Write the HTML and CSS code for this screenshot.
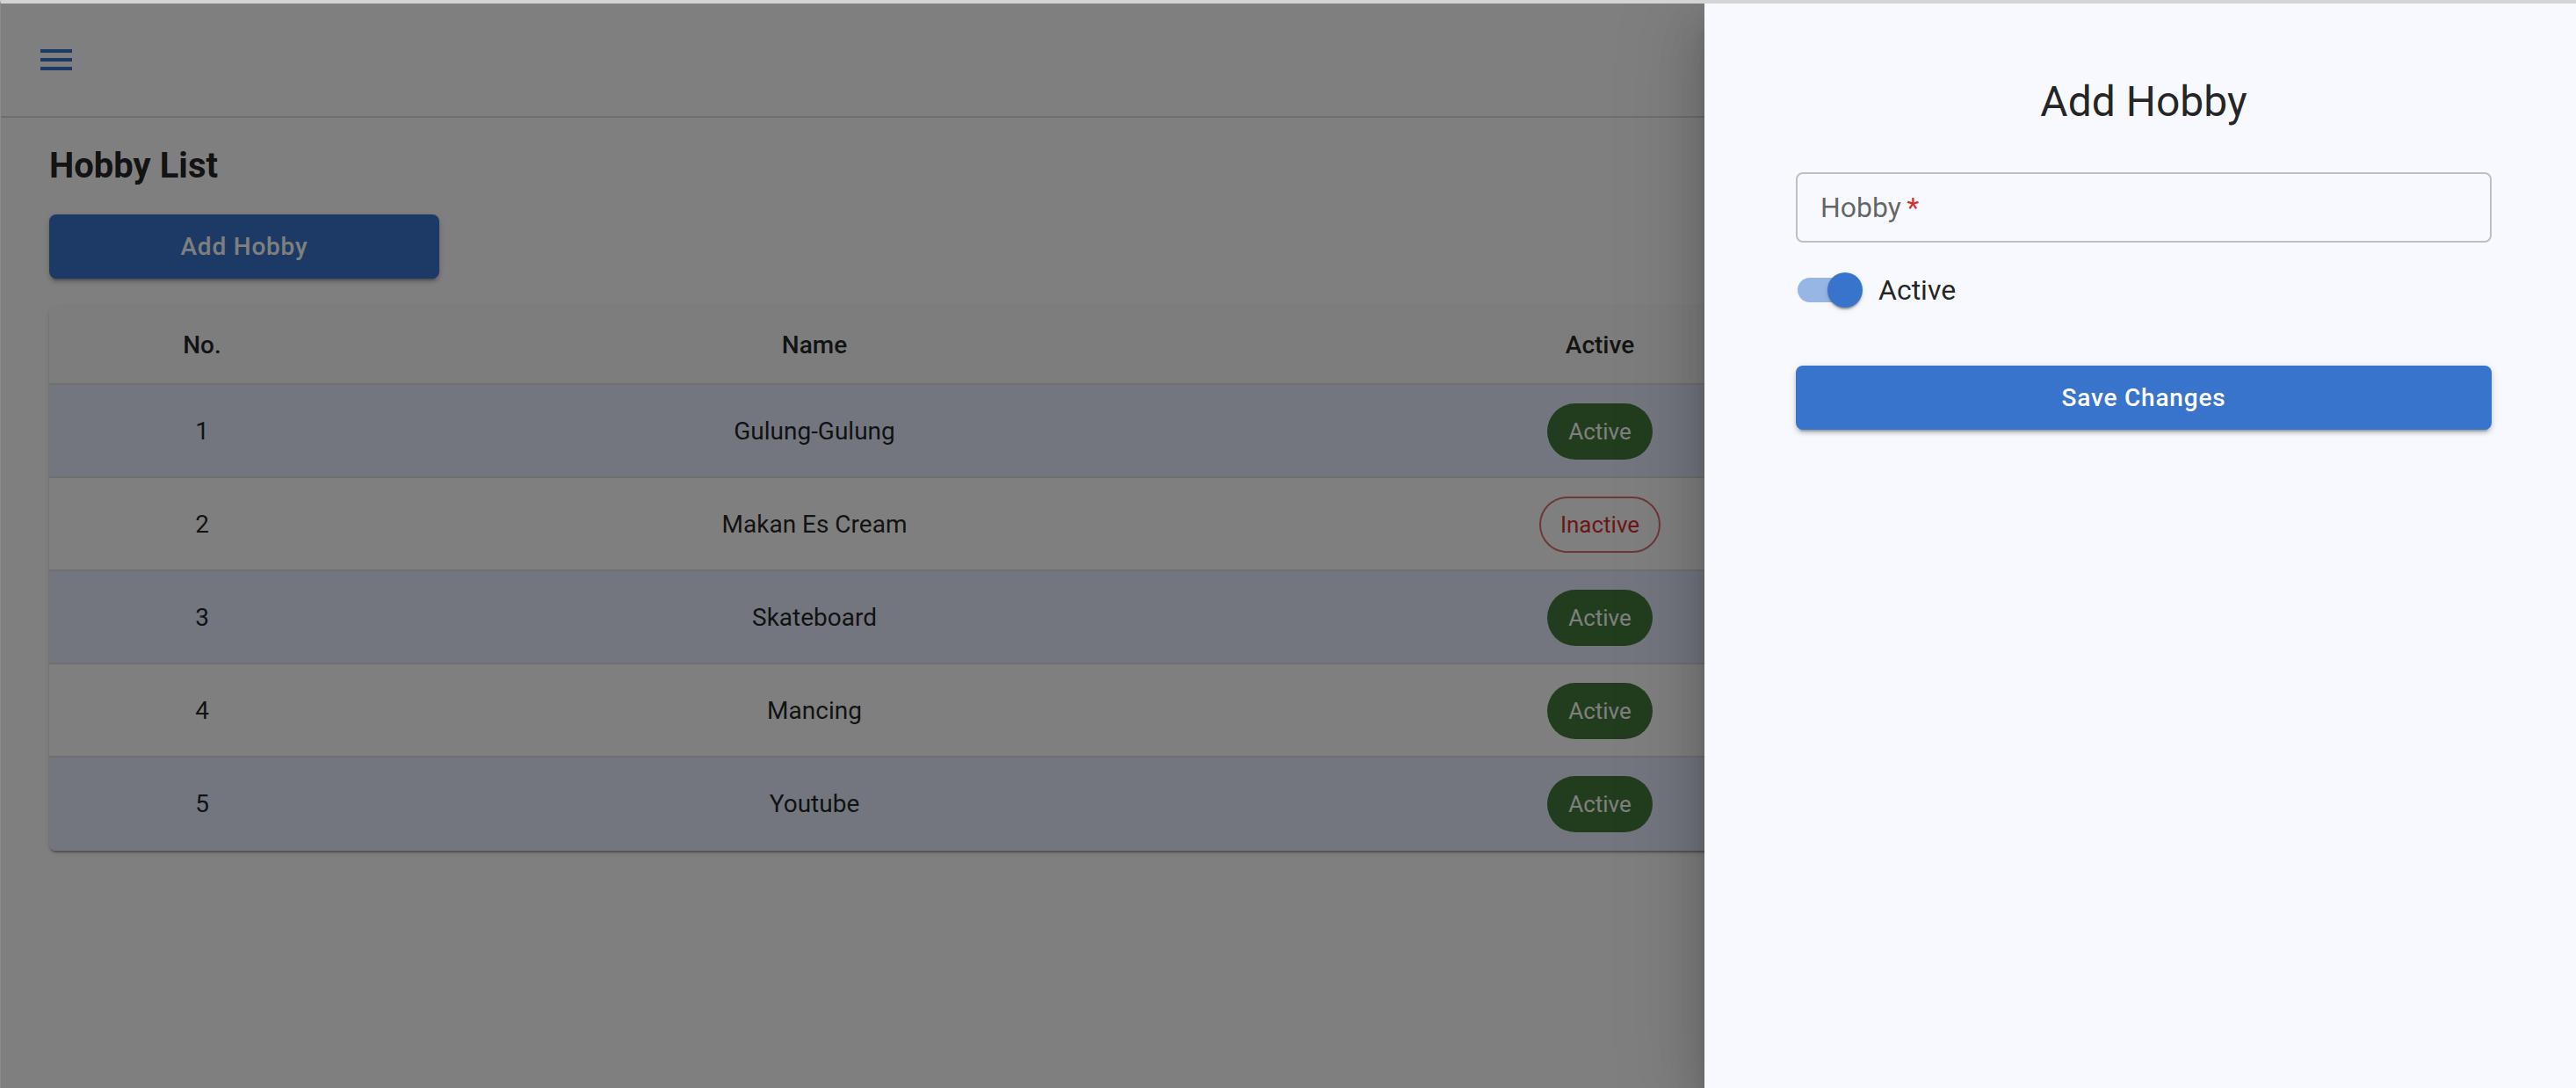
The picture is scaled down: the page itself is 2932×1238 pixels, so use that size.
FILE: index.html
```html
<!DOCTYPE html>
<html lang="en">
<head>
<meta charset="utf-8">
<title>Hobby List</title>
<link rel="stylesheet" href="styles.css">
</head>
<body>
<div class="window">
  <div class="app">
    <header class="appbar">
      <button class="menu-btn" aria-label="menu">
        <svg viewBox="0 0 24 24" width="48" height="48"><path fill="currentColor" d="M3 18h18v-2H3v2zm0-5h18v-2H3v2zm0-7v2h18V6H3z"/></svg>
      </button>
    </header>
    <main class="content">
      <h1 class="page-title">Hobby List</h1>
      <button class="btn btn-add">Add Hobby</button>
      <div class="table-card">
        <div class="trow thead">
          <div class="cell">No.</div>
          <div class="cell">Name</div>
          <div class="cell">Active</div>
        </div>
        <div class="trow tbody striped">
          <div class="cell">1</div>
          <div class="cell">Gulung-Gulung</div>
          <div class="cell"><span class="chip chip-success">Active</span></div>
        </div>
        <div class="trow tbody">
          <div class="cell">2</div>
          <div class="cell">Makan Es Cream</div>
          <div class="cell"><span class="chip chip-error">Inactive</span></div>
        </div>
        <div class="trow tbody striped">
          <div class="cell">3</div>
          <div class="cell">Skateboard</div>
          <div class="cell"><span class="chip chip-success">Active</span></div>
        </div>
        <div class="trow tbody">
          <div class="cell">4</div>
          <div class="cell">Mancing</div>
          <div class="cell"><span class="chip chip-success">Active</span></div>
        </div>
        <div class="trow tbody striped">
          <div class="cell">5</div>
          <div class="cell">Youtube</div>
          <div class="cell"><span class="chip chip-success">Active</span></div>
        </div>
      </div>
    </main>
  </div>
  <div class="backdrop"></div>
  <aside class="drawer">
    <h2 class="drawer-title">Add Hobby</h2>
    <form class="form">
      <label class="field">
        <span class="field-label">Hobby&thinsp;<span class="req">*</span></span>
        <input class="field-input" type="text">
      </label>
      <div class="switch-row">
        <span class="switch">
          <span class="switch-track"></span>
          <span class="switch-thumb"></span>
        </span>
        <span class="switch-label">Active</span>
      </div>
      <button type="button" class="btn btn-save">Save Changes</button>
    </form>
  </aside>
</div>
</body>
</html>
```
FILE: styles.css
```css
* { box-sizing: border-box; }
html, body { margin: 0; padding: 0; }
body {
  font-family: Roboto, "Noto Sans", "Liberation Sans", sans-serif;
  background: #fff;
  overflow: hidden;
}
.window {
  position: relative;
  height: 1238px;
  border-top: 4px solid #d4d4d4;
  border-left: 1px solid #8c8c8c;
  overflow: hidden;
  background: #fff;
}
.appbar {
  height: 130px;
  display: flex;
  align-items: center;
  padding-left: 39px;
  border-bottom: 2px solid #dcdcdc;
  background: #fff;
}
.menu-btn {
  border: 0;
  background: none;
  padding: 0;
  color: #3874cb;
  display: flex;
}
.content {
  padding: 31px 55px 0;
}
.page-title {
  margin: 0;
  font-size: 40px;
  line-height: 48px;
  font-weight: 700;
  color: rgba(0, 0, 0, 0.87);
}
.btn {
  border: 0;
  border-radius: 8px;
  font-family: inherit;
  font-size: 28px;
  font-weight: 500;
  letter-spacing: 0.8px;
  color: #fff;
  background: #3874cb;
  height: 73px;
  box-shadow: 0 6px 2px -4px rgba(0,0,0,0.2), 0 4px 4px 0 rgba(0,0,0,0.14), 0 2px 10px 0 rgba(0,0,0,0.12);
}
.btn-add {
  display: block;
  width: 444px;
  margin-top: 31px;
}
.table-card {
  margin-top: 32px;
  width: 2136px;
  border-radius: 8px;
  background: #fff;
  overflow: hidden;
  box-shadow: 0 4px 2px -2px rgba(0,0,0,0.2), 0 2px 2px 0 rgba(0,0,0,0.14), 0 2px 6px 0 rgba(0,0,0,0.12);
}
.trow {
  display: grid;
  grid-template-columns: 348px 1046px 742px;
  align-items: center;
  border-bottom: 2px solid #dedede;
}
.trow:last-child { border-bottom-color: transparent; }
.thead {
  height: 89px;
  background: #fbfbfb;
  font-weight: 500;
}
.tbody { height: 106px; background: #fff; }
.tbody.striped { background: #e6ecfe; }
.cell {
  text-align: center;
  font-size: 28px;
  line-height: 40px;
  padding-top: 1px;
  color: rgba(0, 0, 0, 0.87);
}
.chip {
  display: inline-flex;
  align-items: center;
  vertical-align: middle;
  height: 64px;
  padding: 0 24px;
  border-radius: 32px;
  font-size: 26px;
}
.chip-success {
  background: #427a3c;
  color: #fff;
}
.chip-error {
  border: 2px solid rgba(211, 47, 47, 0.7);
  color: #d32f2f;
  padding: 0 22px;
}
.backdrop {
  position: absolute;
  inset: 0;
  background: rgba(0, 0, 0, 0.5);
}
.drawer {
  position: absolute;
  top: 0;
  right: 0;
  bottom: 0;
  width: 992px;
  background: #f8f9fe;
  padding: 80px 96px 80px 104px;
  box-shadow: 0 16px 20px -10px rgba(0,0,0,0.2), 0 32px 48px 4px rgba(0,0,0,0.14), 0 12px 92px 16px rgba(0,0,0,0.12);
}
.drawer-title {
  margin: 0;
  text-align: center;
  font-size: 48px;
  line-height: 64px;
  font-weight: 400;
  color: rgba(0, 0, 0, 0.87);
}
.form {
  margin-top: 48px;
  display: flex;
  flex-direction: column;
}
.field {
  height: 80px;
  border: 2px solid rgba(0, 0, 0, 0.23);
  border-radius: 8px;
  display: flex;
  align-items: center;
  padding: 0 26px;
  font-size: 32px;
  color: rgba(0, 0, 0, 0.6);
}
.field-label { white-space: nowrap; }
.req { color: #d32f2f; }
.field-input {
  flex: 1;
  min-width: 0;
  border: 0;
  outline: none;
  background: transparent;
  font: inherit;
}
.switch-row {
  margin-top: 16px;
  margin-left: -22px;
  height: 76px;
  display: flex;
  align-items: center;
}
.switch {
  position: relative;
  width: 116px;
  height: 76px;
  flex: none;
}
.switch-track {
  position: absolute;
  left: 24px;
  top: 24px;
  width: 68px;
  height: 28px;
  border-radius: 14px;
  background: #3874cb;
  opacity: 0.5;
}
.switch-thumb {
  position: absolute;
  left: 58px;
  top: 18px;
  width: 40px;
  height: 40px;
  border-radius: 50%;
  background: #3874cb;
  box-shadow: 0 4px 2px -2px rgba(0,0,0,0.2), 0 2px 2px 0 rgba(0,0,0,0.14), 0 2px 6px 0 rgba(0,0,0,0.12);
}
.switch-label {
  font-size: 32px;
  color: rgba(0, 0, 0, 0.87);
}
.btn-save {
  margin-top: 48px;
  width: 100%;
}
```
